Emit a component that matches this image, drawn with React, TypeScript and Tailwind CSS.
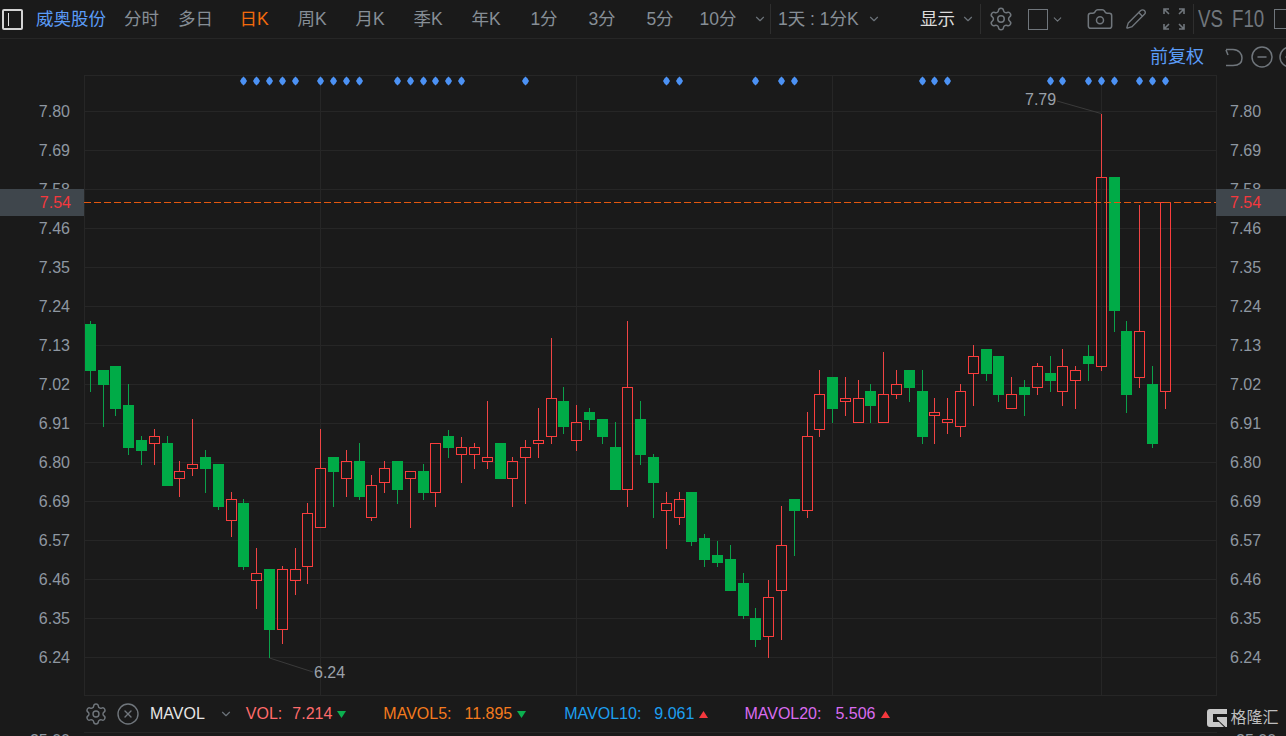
import React from "react";
import { Camera, ChevronDown, CircleMinus, CirclePlus, CircleX, Pencil, Settings } from "lucide-react";

type C = [number, number, number, number, number, "g" | "r"];
const candles: C[] = [
  [90, 321, 324, 371, 392, "g"], [103, 370, 370, 385, 427, "g"], [115, 366, 366, 409, 416, "g"], [128, 384, 405, 448, 455, "g"],
  [141, 436, 440, 451, 465, "g"], [154, 429, 436, 444, 465, "r"], [167, 436, 443, 486, 486, "g"], [179, 461, 471, 479, 497, "r"],
  [192, 419, 464, 469, 476, "r"], [205, 450, 457, 469, 493, "g"], [218, 464, 464, 507, 510, "g"], [231, 492, 499, 521, 537, "r"],
  [243, 499, 503, 567, 570, "g"], [256, 548, 573, 581, 609, "r"], [269, 569, 569, 630, 658, "g"], [282, 566, 569, 630, 644, "r"],
  [295, 548, 569, 581, 595, "r"], [307, 503, 513, 567, 584, "r"], [320, 429, 468, 528, 528, "r"], [333, 457, 457, 472, 507, "g"],
  [346, 450, 461, 479, 497, "r"], [359, 443, 461, 497, 500, "g"], [371, 475, 485, 518, 521, "r"], [384, 461, 468, 483, 493, "r"],
  [397, 461, 461, 490, 504, "g"], [410, 471, 471, 479, 528, "r"], [423, 464, 471, 493, 500, "g"], [435, 443, 443, 493, 507, "r"],
  [448, 430, 436, 448, 458, "g"], [461, 437, 447, 455, 483, "r"], [474, 443, 447, 455, 469, "r"], [487, 401, 457, 462, 469, "r"],
  [500, 443, 443, 479, 479, "g"], [512, 457, 461, 479, 507, "r"], [525, 440, 447, 458, 504, "r"], [538, 408, 440, 444, 458, "r"],
  [551, 338, 398, 437, 444, "r"], [563, 387, 401, 427, 434, "g"], [576, 405, 422, 441, 451, "r"], [589, 408, 412, 420, 430, "g"],
  [602, 419, 419, 437, 444, "g"], [615, 422, 447, 490, 490, "g"], [627, 321, 387, 490, 507, "r"], [640, 401, 419, 455, 465, "g"],
  [653, 454, 457, 483, 518, "g"], [666, 492, 503, 511, 549, "r"], [679, 492, 499, 518, 525, "r"], [691, 492, 492, 542, 546, "g"],
  [704, 534, 538, 560, 567, "g"], [717, 541, 555, 563, 567, "g"], [730, 545, 559, 591, 591, "g"], [743, 573, 583, 616, 619, "g"],
  [755, 608, 618, 640, 647, "g"], [768, 580, 597, 637, 658, "r"], [781, 506, 545, 591, 640, "r"], [794, 499, 499, 511, 556, "g"],
  [807, 412, 436, 511, 518, "r"], [819, 370, 394, 430, 437, "r"], [832, 377, 377, 409, 423, "g"], [845, 377, 398, 402, 416, "r"],
  [858, 380, 398, 423, 423, "r"], [870, 384, 391, 406, 423, "g"], [883, 352, 394, 423, 423, "r"], [896, 370, 384, 395, 399, "r"],
  [909, 370, 370, 388, 402, "g"], [922, 370, 391, 437, 444, "g"], [934, 398, 412, 416, 444, "r"], [947, 398, 419, 423, 434, "r"],
  [960, 384, 391, 427, 437, "r"], [973, 345, 356, 374, 406, "r"], [986, 349, 349, 374, 381, "g"], [998, 356, 356, 395, 402, "g"],
  [1011, 377, 394, 409, 409, "r"], [1024, 380, 387, 395, 416, "g"], [1037, 363, 366, 388, 395, "r"], [1050, 356, 373, 381, 392, "g"],
  [1062, 349, 366, 392, 406, "r"], [1075, 366, 370, 381, 409, "r"], [1088, 345, 356, 364, 381, "g"], [1101, 114, 177, 367, 371, "r"],
  [1114, 177, 177, 311, 332, "g"], [1126, 321, 331, 395, 413, "g"], [1139, 205, 331, 378, 388, "r"], [1152, 366, 384, 444, 448, "g"],
  [1165, 202, 202, 392, 409, "r"],
];

const dots = [243, 256, 269, 282, 295, 320, 333, 346, 359, 397, 410, 423, 435, 448, 461, 525, 666, 679, 755, 781, 794, 922, 934, 947, 1050, 1062, 1088, 1101, 1114, 1139, 1152, 1165];
const hLines = [111, 150, 189, 228, 267, 306, 345, 384, 423, 462, 501, 540, 579, 618, 657];
const vLines = [320, 576, 832, 1101];
const labels = ["7.80", "7.69", "7.58", "7.46", "7.35", "7.24", "7.13", "7.02", "6.91", "6.80", "6.69", "6.57", "6.46", "6.35", "6.24"];
const tabs = ["日K", "周K", "月K", "季K", "年K", "1分", "3分", "5分", "10分"];

function Axis({ side }: { side: "left" | "right" }) {
  return (
    <div className={side === "left" ? "relative w-[84px] pt-[17px] text-right pr-[14px] shrink-0" : "relative w-[69px] pt-[17px] pl-[13px] shrink-0"}>
      {labels.map((l) => (
        <div key={l} className="h-[39px] leading-[39px] text-[16px] text-[#8e97a1]">{l}</div>
      ))}
      <div className={side === "left" ? "absolute left-0 right-0 top-[114px] h-[27px] bg-[#3f464c] text-right pr-[13px] text-[16px] leading-[27px] text-[#f5383d]" : "absolute left-[-1px] right-0 top-[114px] h-[27px] bg-[#3f464c] pl-[14px] text-[16px] leading-[27px] text-[#f5383d]"}>7.54</div>
    </div>
  );
}

function Chart() {
  return (
    <svg width={1133} height={621} viewBox="84 75 1133 621" className="block shrink-0">
      {hLines.map((y) => <rect key={y} x={84} y={y} width={1133} height={1} fill="#262626" />)}
      {vLines.map((x) => <rect key={x} x={x} y={75} width={1} height={621} fill="#262626" />)}
      <rect x={84.5} y={75.5} width={1132} height={620} fill="none" stroke="#262626" />
      {dots.map((x) => (
        <polygon key={x} fill="#4c92f5" points={`${x + 0.5},76.5 ${x + 2.5},78.5 ${x + 4},81 ${x + 2.5},83.5 ${x + 0.5},85.5 ${x - 1.5},83.5 ${x - 3},81 ${x - 1.5},78.5`} />
      ))}
      <line x1={269.5} y1={658} x2={313} y2={672} stroke="#3a3a3a" />
      <line x1={1057} y1={101} x2={1101} y2={113.5} stroke="#3a3a3a" />
      {candles.map(([x, hi, top, bot, lo, c]) => {
        const col = c === "g" ? "#00ab47" : "#fa3d3d";
        const wick = c === "g" ? "#0ba04a" : "#ef4444";
        return (
          <g key={x}>
            {hi < top && <rect x={x} y={hi} width={1} height={top - hi} fill={wick} />}
            {lo > bot && <rect x={x} y={bot} width={1} height={lo - bot} fill={wick} />}
            {c === "g" ? (
              <rect x={x - 5} y={top} width={11} height={bot - top} fill={col} />
            ) : (
              <rect x={x - 4.5} y={top + 0.5} width={10} height={bot - top - 1} fill="none" stroke={col} />
            )}
          </g>
        );
      })}
      <line x1={84} y1={202.5} x2={1216} y2={202.5} stroke="#e4570f" strokeDasharray="7 3" />
      <text x={314} y={678} fontSize={16} fill="#9aa1a9" fontFamily="Liberation Sans">6.24</text>
      <text x={1025} y={105} fontSize={16} fill="#9aa1a9" fontFamily="Liberation Sans">7.79</text>
    </svg>
  );
}

const Tri = ({ up }: { up: boolean }) => (
  <svg width={9} height={7} viewBox="0 0 9 7" className="ml-[5px] shrink-0">
    <polygon points={up ? "4.5,0 9,7 0,7" : "0,0 9,0 4.5,7"} fill={up ? "#f5383d" : "#0bb04f"} />
  </svg>
);

export default function App() {
  return (
    <div className="flex h-[736px] w-[1286px] flex-col overflow-hidden bg-[#1a1a1a] font-['Liberation_Sans','Noto_Sans_CJK_SC',sans-serif]">
      {/* top toolbar */}
      <div className="flex h-[39px] shrink-0 items-center border-b border-[#262626] text-[17.5px] text-[#868e96] *:shrink-0">
        <div className="ml-[2px] flex h-[21px] w-[21px] items-center rounded-[2px] border-2 border-[#d4d4d4] pl-[4px]">
          <div className="h-[13px] w-[1px] bg-[#e5e5e5]" />
        </div>
        <span className="ml-[13px] w-[72px] whitespace-nowrap text-[#5a9cf8]">威奥股份</span>
        <span className="ml-[16px] w-[36px] whitespace-nowrap">分时</span>
        <span className="ml-[18px] w-[36px] whitespace-nowrap">多日</span>
        <div className="ml-[11px] flex">
          {tabs.map((t) => (
            <span key={t} className={t === "日K" ? "w-[58px] text-center text-[#f26a0c]" : "w-[58px] text-center"}>{t}</span>
          ))}
        </div>
        <ChevronDown size={14} strokeWidth={2} className="ml-[6px] text-[#6b7279]" />
        <div className="ml-[3px] h-[30px] w-px bg-[#2e2e2e]" />
        <span className="ml-[7px] w-[84px] whitespace-nowrap">1天 : 1分K</span>
        <ChevronDown size={14} strokeWidth={2} className="ml-[5px] text-[#6b7279]" />
        <span className="ml-[39px] w-[36px] whitespace-nowrap text-[#dcdcdc]">显示</span>
        <ChevronDown size={14} strokeWidth={2} className="ml-[5px] text-[#6b7279]" />
        <div className="ml-[5px] h-[30px] w-px bg-[#2e2e2e]" />
        <Settings size={26} strokeWidth={1.4} className="ml-[7px] text-[#70767c]" />
        <div className="ml-[14px] h-[21px] w-[20px] border border-[#70767c]" />
        <ChevronDown size={13} strokeWidth={2} className="ml-[3px] text-[#70767c]" />
        <Camera size={28} strokeWidth={1.3} className="ml-[22px] text-[#70767c]" />
        <Pencil size={22} strokeWidth={1.5} className="ml-[11px] text-[#70767c]" />
        <svg width={22} height={22} viewBox="0 0 22 22" fill="none" stroke="#70767c" strokeWidth={1.6} className="ml-[16px]">
          <path d="M1 6V1h5M1 1l5 5M16 1h5v5M21 1l-5 5M1 16v5h5M1 21l5-5M21 16v5h-5M21 21l-5-5" />
        </svg>
        <div className="ml-[8px] h-[30px] w-px bg-[#2e2e2e]" />
        <span className="ml-[4px] w-[34px] origin-left scale-x-[0.78] whitespace-nowrap text-[24px] font-light text-[#70767c]">VS</span>
        <span className="w-[42px] origin-left scale-x-[0.78] whitespace-nowrap text-[24px] font-light text-[#70767c]">F10</span>
        <div className="h-[20px] w-[20px] border border-[#70767c]" />
      </div>

      {/* adjust bar */}
      <div className="flex h-[36px] shrink-0 items-center justify-end text-[#5a9cf8] *:shrink-0">
        <span className="text-[18px]">前复权</span>
        <svg width={20} height={20} viewBox="0 0 20 20" fill="none" stroke="#70767c" strokeWidth={1.5} className="ml-[20px]">
          <path d="M2 3l2 5M2 2.5h7c6 0 9 4.500 9 8.500 0 4.500-3 7.500-9 7.500H2" />
        </svg>
        <CircleMinus size={24} strokeWidth={1.5} className="ml-[6px] text-[#70767c]" />
        <CirclePlus size={24} strokeWidth={1.5} className="ml-[4px] mr-[-16px] text-[#70767c]" />
      </div>

      {/* price chart */}
      <div className="flex h-[621px] shrink-0">
        <Axis side="left" />
        <Chart />
        <Axis side="right" />
      </div>

      {/* indicator bar */}
      <div className="flex h-[36px] shrink-0 items-center text-[16px] *:shrink-0">
        <Settings size={24} strokeWidth={1.4} className="ml-[84px] text-[#70767c]" />
        <CircleX size={24} strokeWidth={1.4} className="ml-[8px] text-[#70767c]" />
        <span className="ml-[10px] text-[#e6e6e6]">MAVOL</span>
        <ChevronDown size={14} strokeWidth={2} className="ml-[14px] text-[#6b7279]" />
        <span className="ml-[13px] text-[#ff6b6b]">VOL:</span>
        <span className="ml-[10px] text-[#ff6b6b]">7.214</span>
        <Tri up={false} />
        <span className="ml-[37px] text-[#f47a1e]">MAVOL5:</span>
        <span className="ml-[13px] text-[#f47a1e]">11.895</span>
        <Tri up={false} />
        <span className="ml-[38px] text-[#1d9ff0]">MAVOL10:</span>
        <span className="ml-[13px] text-[#1d9ff0]">9.061</span>
        <Tri up />
        <span className="ml-[36px] text-[#d96cf0]">MAVOL20:</span>
        <span className="ml-[14px] text-[#d96cf0]">5.506</span>
        <Tri up />
        <svg width={20} height={18} viewBox="0 0 20 18" className="ml-[317px] mt-[8px]">
          <path fill="#c8c8c8" d="M3 0H20V5H6V13H12L17 18H3A3 3 0 0 1 0 15V3A3 3 0 0 1 3 0Z" />
          <path fill="#c8c8c8" d="M10 8H20V18H18.500L10 10Z" />
        </svg>
        <span className="ml-[4px] mt-[8px] whitespace-nowrap text-[16px] text-[#bdbdbd]">格隆汇</span>
      </div>

      {/* next pane start */}
      <div className="flex h-[4px] shrink-0 overflow-hidden">
        <div className="w-[84px] pr-[14px] pt-[1px] text-right text-[16px] leading-[16px] text-[#8e97a1]">25.00</div>
        <div className="h-px w-[1133px] bg-[#262626]" />
        <div className="pl-[19px] pt-[1px] text-[16px] leading-[16px] text-[#8e97a1]">25.00</div>
      </div>
    </div>
  );
}
